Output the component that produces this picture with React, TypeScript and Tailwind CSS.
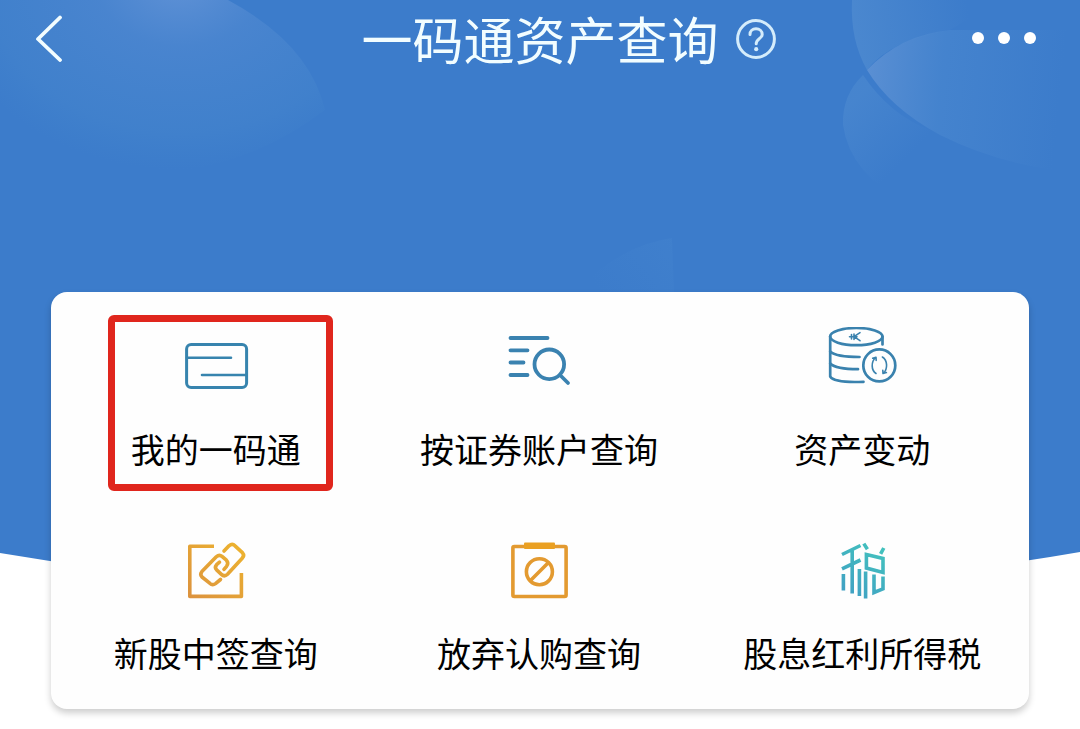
import type { ReactNode } from "react";

function Svg({ children }: { children: ReactNode }) {
  return (
    <svg
      viewBox="0 0 80 80"
      className="size-20"
      fill="none"
      strokeLinecap="round"
      strokeLinejoin="round"
      aria-hidden="true"
    >
      {children}
    </svg>
  );
}

const CardIcon = () => (
  <Svg>
    <g stroke="#3784ae" strokeWidth="3">
      <rect x="10.6" y="17.6" width="60" height="43" rx="4.5" />
      <path d="M11 30.7H55M26 48H70" strokeWidth="2.6" />
    </g>
  </Svg>
);

const SearchIcon = () => (
  <Svg>
    <g stroke="#3a82b0" strokeWidth="3.8">
      <path d="M11.5 11H48.5M11.5 23.3H28.5M11.5 35.5H24.5M11.5 48H28.5" />
      <circle cx="50.3" cy="37.3" r="14.8" />
      <path d="M61 48L69 56" />
    </g>
  </Svg>
);

const CoinsIcon = () => (
  <Svg>
    <g stroke="#3a82ae" strokeWidth="2.7">
      <ellipse cx="34.3" cy="9.6" rx="26.2" ry="8.6" />
      <path d="M8.2 9.6V49.5Q12 56 41.5 54.8" />
      <path d="M8.2 24.5Q14 30 37.5 30M8.2 36.5Q14 42.2 36 42.2M60.5 9.6V17.5" />
      <circle cx="57.3" cy="38.4" r="16" />
      <g strokeWidth="1.6">
        <path d="M27.5 9.7H35M38 5.7L32 9.7L38 13.7M29.5 7.5V12M32 7V12.4" />
        <path d="M54 46.5C49 43 49 35 53.5 30.5M50.7 31.3L54 30.3L54.2 33.4" />
        <path d="M60.4 30C65.8 33.5 65.8 42 61.4 46.3M64.4 45.6L61 46.5L60.8 43.3" />
      </g>
    </g>
  </Svg>
);

const LinkIcon = () => (
  <Svg>
    <defs>
      <linearGradient id="link" x1="64" y1="12" x2="16" y2="66" gradientUnits="userSpaceOnUse">
        <stop stopColor="#edb32f" />
        <stop offset="1" stopColor="#dc933e" />
      </linearGradient>
    </defs>
    <g stroke="url(#link)" strokeWidth="3.6">
      <path d="M38 15.2H13.8V65.4H65.4V42" strokeLinecap="butt" />
      <path d="M44.5 48.5L39.5 52.6Q36.5 54.8 33.7 52.2L26 46Q23.6 43.3 25.9 40.6L40.3 25.8Q43.3 23 46 25.4L50.4 29.2Q53 32 50.6 35.3L48 38.4" />
      <path d="M48 20L53 14.8Q56.3 12 59 14.8L66.4 21.6Q68.8 24.4 66.2 27.2L51.5 43.2Q48.4 46.2 45.4 43.4L40.6 38.9Q38.2 36.3 40.6 33.7L43.5 31.2" />
    </g>
  </Svg>
);

const ClipboardIcon = () => (
  <Svg>
    <g stroke="#e39a30" strokeWidth="3.6">
      <rect x="13.9" y="15.5" width="53.2" height="50" rx="1.5" />
      <circle cx="40.4" cy="40.7" r="13" />
      <path d="M32 49L49 32" />
    </g>
    <rect x="25" y="11.4" width="31" height="6.6" rx="1" fill="#eaa022" />
  </Svg>
);

const TaxIcon = () => (
  <Svg>
    <defs>
      <linearGradient id="tax" x1="60" y1="12" x2="22" y2="66" gradientUnits="userSpaceOnUse">
        <stop stopColor="#43c4bd" />
        <stop offset="1" stopColor="#409ec4" />
      </linearGradient>
    </defs>
    <g stroke="url(#tax)" strokeWidth="3.6" strokeLinecap="butt" strokeLinejoin="miter">
      <path d="M20 23.5L38.5 14.5M20 37.8L38.5 29M30.2 19V62.5" />
      <path d="M21.4 43V59.5M37.4 38V65M43.6 40.5V67.5" />
      <path d="M41.8 12.6L45.4 18.2M61.8 17L58.6 22.8" />
      <path d="M44.4 23.6L61 27.4V41.4L44.4 37Z" />
      <path d="M52 43.5V61.5L61 57.8V45.5" />
    </g>
  </Svg>
);

const items = [
  { label: "我的一码通", icon: <CardIcon />, marked: true },
  { label: "按证券账户查询", icon: <SearchIcon /> },
  { label: "资产变动", icon: <CoinsIcon /> },
  { label: "新股中签查询", icon: <LinkIcon /> },
  { label: "放弃认购查询", icon: <ClipboardIcon /> },
  { label: "股息红利所得税", icon: <TaxIcon /> },
];

function Backdrop() {
  return (
    <svg
      viewBox="0 0 1080 600"
      preserveAspectRatio="none"
      className="absolute inset-x-0 top-0 -z-10 h-[600px] w-full"
      aria-hidden="true"
    >
      <defs>
        <radialGradient
          id="glowLeft"
          cx="0"
          cy="0"
          r="1"
          gradientUnits="userSpaceOnUse"
          gradientTransform="translate(180 -20) scale(240 190)"
        >
          <stop stopColor="#6a98d9" stopOpacity="0.8" />
          <stop offset="0.35" stopColor="#5089d1" stopOpacity="0.65" />
          <stop offset="0.8" stopColor="#4585cd" stopOpacity="0.5" />
          <stop offset="1" stopColor="#4284cc" stopOpacity="0" />
        </radialGradient>
        <linearGradient id="glowTop" x1="850" y1="40" x2="970" y2="20" gradientUnits="userSpaceOnUse">
          <stop stopColor="#5590d2" stopOpacity="0.6" />
          <stop offset="1" stopColor="#5590d2" stopOpacity="0" />
        </linearGradient>
        <linearGradient id="glowRight" x1="860" y1="80" x2="1060" y2="100" gradientUnits="userSpaceOnUse">
          <stop stopColor="#6797d6" stopOpacity="0.75" />
          <stop offset="0.4" stopColor="#4a88d0" stopOpacity="0.6" />
          <stop offset="1" stopColor="#4a88d0" stopOpacity="0" />
        </linearGradient>
        <linearGradient id="glowLow" x1="845" y1="110" x2="900" y2="165" gradientUnits="userSpaceOnUse">
          <stop stopColor="#4d8ad0" stopOpacity="0.6" />
          <stop offset="1" stopColor="#4d8ad0" stopOpacity="0" />
        </linearGradient>
        <linearGradient id="glowMid" x1="672" y1="238" x2="600" y2="292" gradientUnits="userSpaceOnUse">
          <stop stopColor="#4383ce" stopOpacity="0.5" />
          <stop offset="1" stopColor="#4383ce" stopOpacity="0" />
        </linearGradient>
      </defs>
      <path d="M0 0H1080V552Q540 645 0 553Z" fill="#3c7ccb" />
      <path d="M0 0H228Q310 44 325 110Q240 175 130 175Q50 175 0 170Z" fill="url(#glowLeft)" />
      <path d="M852 0Q850 40 867 70Q890 40 950 30L1000 0Z" fill="url(#glowTop)" />
      <path d="M867 70Q900 35 950 30H1070V172Q1000 165 940 135Q890 108 867 70Z" fill="url(#glowRight)" />
      <path d="M863 75Q890 115 930 130L910 205Q850 175 843 125Q842 95 863 75Z" fill="url(#glowLow)" />
      <path d="M575 292Q620 245 672 238L674 292Z" fill="url(#glowMid)" />
    </svg>
  );
}

export default function App() {
  return (
    <div className="relative isolate min-h-screen overflow-hidden bg-white pb-5 font-['Noto_Sans_CJK_SC','Noto_Sans',sans-serif] text-black">
      <Backdrop />
      <header className="flex h-[76px] items-center justify-between px-8 text-[#f2fdff]">
        <button type="button" aria-label="返回" className="flex h-12 w-24 items-center">
          <svg viewBox="0 0 36 48" className="h-12 w-9" fill="none" aria-hidden="true">
            <path
              d="M28 3.5L6 25L28 46"
              stroke="currentColor"
              strokeWidth="3.8"
              strokeLinecap="round"
              strokeLinejoin="round"
            />
          </svg>
        </button>
        <div className="relative">
          <h1 className="text-[51px] leading-[76px] whitespace-nowrap">一码通资产查询</h1>
          <button
            type="button"
            aria-label="帮助"
            className="absolute top-1/2 left-full ml-4 -translate-y-1/2"
          >
            <svg viewBox="0 0 42 42" className="size-[42px]" fill="none" aria-hidden="true">
              <g stroke="#d4ecfb" strokeWidth="3" strokeLinecap="round">
                <circle cx="21" cy="22" r="18.4" />
                <path d="M15 17.5C15 13.8 17.5 11.8 21 11.8S27.2 14 27.2 17.4C27.2 21.5 21.2 22 21.2 26.8" />
              </g>
              <circle cx="21.2" cy="32.2" r="2.1" fill="#d4ecfb" />
            </svg>
          </button>
        </div>
        <button
          type="button"
          aria-label="更多"
          className="flex h-12 w-24 items-center justify-end gap-[14px] pr-3"
        >
          <span className="size-3 rounded-full bg-white" />
          <span className="size-3 rounded-full bg-white" />
          <span className="size-3 rounded-full bg-white" />
        </button>
      </header>

      <main className="mt-[216px] px-[51px]">
        <section className="grid grid-cols-3 gap-y-7 rounded-2xl bg-[#fefefe] pt-[23px] pr-[5px] pb-[14px] pl-[3px] shadow-[0_4px_7px_rgba(0,0,0,0.2)]">
          {items.map(({ label, icon, marked }) => (
            <button
              key={label}
              type="button"
              className="relative flex flex-col items-center gap-[18px] pt-3 pb-[18px]"
            >
              {icon}
              <span className="text-[34px] leading-[48px] whitespace-nowrap">{label}</span>
              {marked && (
                <span className="absolute inset-y-0 left-1/2 -ml-[108px] w-[225px] rounded-md border-[7px] border-[#e0261d]" />
              )}
            </button>
          ))}
        </section>
      </main>
    </div>
  );
}
